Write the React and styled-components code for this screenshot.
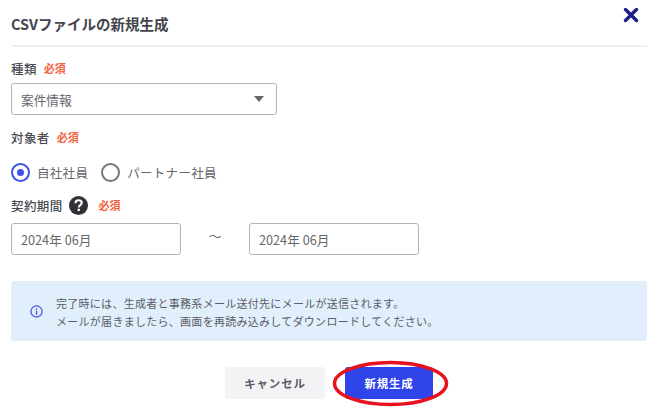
import React from 'react';
import styled, { createGlobalStyle } from 'styled-components';

const GlobalStyle = createGlobalStyle`
	html, body {
		margin: 0;
		padding: 0;
		background: #fff;
	}
	body {
		font-family: "Noto Sans CJK JP", "Noto Sans", sans-serif;
		color: #4a4a52;
	}
`;

const Modal = styled.div`
	width: 670px;
	height: 416px;
	box-sizing: border-box;
	padding: 0 23px 0 11px;
	overflow: hidden;
`;

const Header = styled.div`
	height: 47px;
	box-sizing: border-box;
	border-bottom: 2px solid #efefef;
	position: relative;
	padding-top: 13px;
`;

const Title = styled.h1`
	margin: 0;
	font-size: 14.5px;
	line-height: 22px;
	font-weight: 700;
	color: #44444c;
`;

const CloseButton = styled.button`
	position: absolute;
	top: 7px;
	right: 8px;
	width: 16px;
	height: 16px;
	padding: 0;
	border: 0;
	background: none;
	display: block;
`;

const Field = styled.div`
	display: flex;
	flex-direction: column;
`;

const LabelRow = styled.div`
	display: flex;
	align-items: center;
	height: 20px;
	margin-top: ${(p) => p.$top}px;
	margin-bottom: ${(p) => p.$bottom || 0}px;
`;

const Label = styled.span`
	font-size: 12.5px;
	font-weight: 500;
	color: #4a4a52;
	letter-spacing: 0.4px;
`;

const Required = styled.span`
	font-size: 11px;
	font-weight: 700;
	color: #f5623f;
	margin-left: ${(p) => p.$left || 7}px;
`;

const HelpIcon = styled.svg`
	width: 19px;
	height: 19px;
	margin-left: 6px;
`;

const Box = styled.div`
	box-sizing: border-box;
	width: ${(p) => p.$width}px;
	height: 32px;
	border: 1px solid #b4b4b4;
	border-radius: 3px;
	display: flex;
	align-items: center;
	justify-content: space-between;
	padding: 0 9px;
	font-size: 12.7px;
	color: #66666c;
	background: #fff;
`;

const Caret = styled.span`
	width: 0;
	height: 0;
	margin-right: 3px;
	border-left: 5.5px solid transparent;
	border-right: 5.5px solid transparent;
	border-top: 6px solid #66666c;
`;

const RadioRow = styled.div`
	display: flex;
	align-items: center;
	height: 20px;
	margin-top: 15px;
`;

const RadioLabel = styled.label`
	display: flex;
	align-items: center;
	font-size: 12.5px;
	letter-spacing: 0.3px;
	color: #66666c;
	margin-right: 13px;
`;

const RadioMark = styled.span`
	box-sizing: border-box;
	width: 19px;
	height: 19px;
	border-radius: 50%;
	border: 2px solid ${(p) => (p.$on ? '#3f51e8' : '#77777c')};
	margin-right: 7px;
	display: flex;
	align-items: center;
	justify-content: center;
	&::after {
		content: '';
		display: ${(p) => (p.$on ? 'block' : 'none')};
		width: 7px;
		height: 7px;
		border-radius: 50%;
		background: #3f51e8;
	}
`;

const DateRow = styled.div`
	display: flex;
	align-items: center;
	margin-top: 8px;
`;

const Tilde = styled.span`
	width: 68px;
	text-align: center;
	font-size: 13px;
	color: #66666c;
	margin-top: -8px;
`;

const Notice = styled.div`
	margin-top: 26px;
	height: 60px;
	box-sizing: border-box;
	background: #e1eefc;
	border-radius: 3px;
	display: flex;
	align-items: center;
	padding-left: 19px;
`;

const NoticeText = styled.p`
	margin: 1px 0 0 13px;
	font-size: 11px;
	line-height: 18px;
	color: #5c5c64;
	letter-spacing: 0.28px;
`;

const Actions = styled.div`
	display: flex;
	justify-content: center;
	gap: 20px;
	margin-top: 26px;
`;

const Button = styled.button`
	height: 32px;
	width: ${(p) => p.$width}px;
	border: 0;
	border-radius: 3px;
	padding: 0;
	font-family: inherit;
	font-size: 11.5px;
	font-weight: 700;
	letter-spacing: 0.8px;
	color: ${(p) => (p.$primary ? '#fff' : '#5c5c64')};
	background: ${(p) => (p.$primary ? '#2f45ea' : '#f3f3f6')};
`;

const PrimaryWrap = styled.div`
	position: relative;
	display: flex;
`;

const Circle = styled.svg`
	position: absolute;
	left: -13px;
	top: -7px;
	width: 117px;
	height: 47px;
	pointer-events: none;
`;

export default function App() {
	return (
		<>
			<GlobalStyle />
			<Modal>
				<Header>
					<Title>CSVファイルの新規生成</Title>
					<CloseButton aria-label="閉じる">
						<svg width="16" height="16" viewBox="0 0 16 16">
							<path d="M2.5 2.5 L13.5 13.5 M13.5 2.5 L2.5 13.5" stroke="#1c1f87" strokeWidth="3.4" strokeLinecap="round" fill="none" />
						</svg>
					</CloseButton>
				</Header>

				<Field>
					<LabelRow $top={11} $bottom={5}>
						<Label>種類</Label>
						<Required>必須</Required>
					</LabelRow>
					<Box $width={266}>
						案件情報
						<Caret />
					</Box>
				</Field>

				<Field>
					<LabelRow $top={12}>
						<Label>対象者</Label>
						<Required>必須</Required>
					</LabelRow>
					<RadioRow>
						<RadioLabel>
							<RadioMark $on />
							自社社員
						</RadioLabel>
						<RadioLabel>
							<RadioMark />
							パートナー社員
						</RadioLabel>
					</RadioRow>
				</Field>

				<Field>
					<LabelRow $top={13}>
						<Label>契約期間</Label>
						<HelpIcon viewBox="0 0 20 20">
							<circle cx="10" cy="10" r="10" fill="#2f3038" />
							<path d="M6.8 7.6 C6.8 5.6 8.3 4.5 10.1 4.5 C12 4.5 13.4 5.6 13.4 7.3 C13.4 9.6 10.3 9.6 10.3 12" stroke="#fff" strokeWidth="2.2" fill="none" />
							<rect x="9" y="13.4" width="2.5" height="2.4" fill="#fff" />
						</HelpIcon>
						<Required $left={11}>必須</Required>
					</LabelRow>
					<DateRow>
						<Box $width={170}>2024年 06月</Box>
						<Tilde>〜</Tilde>
						<Box $width={170}>2024年 06月</Box>
					</DateRow>
				</Field>

				<Notice>
					<svg width="13" height="13" viewBox="0 0 14 14">
						<circle cx="7" cy="7" r="6" stroke="#3f51e8" strokeWidth="1.3" fill="none" />
						<rect x="6.3" y="6" width="1.4" height="4.4" fill="#3f51e8" />
						<rect x="6.3" y="3.6" width="1.4" height="1.5" fill="#3f51e8" />
					</svg>
					<NoticeText>
						完了時には、生成者と事務系メール送付先にメールが送信されます。
						<br />
						メールが届きましたら、画面を再読み込みしてダウンロードしてください。
					</NoticeText>
				</Notice>

				<Actions>
					<Button $width={100}>キャンセル</Button>
					<PrimaryWrap>
						<Button $primary $width={88}>新規生成</Button>
						<Circle viewBox="0 0 117 47">
							<ellipse cx="58.5" cy="23.5" rx="56" ry="21" stroke="#e8121f" strokeWidth="3.5" fill="none" />
						</Circle>
					</PrimaryWrap>
				</Actions>
			</Modal>
		</>
	);
}
